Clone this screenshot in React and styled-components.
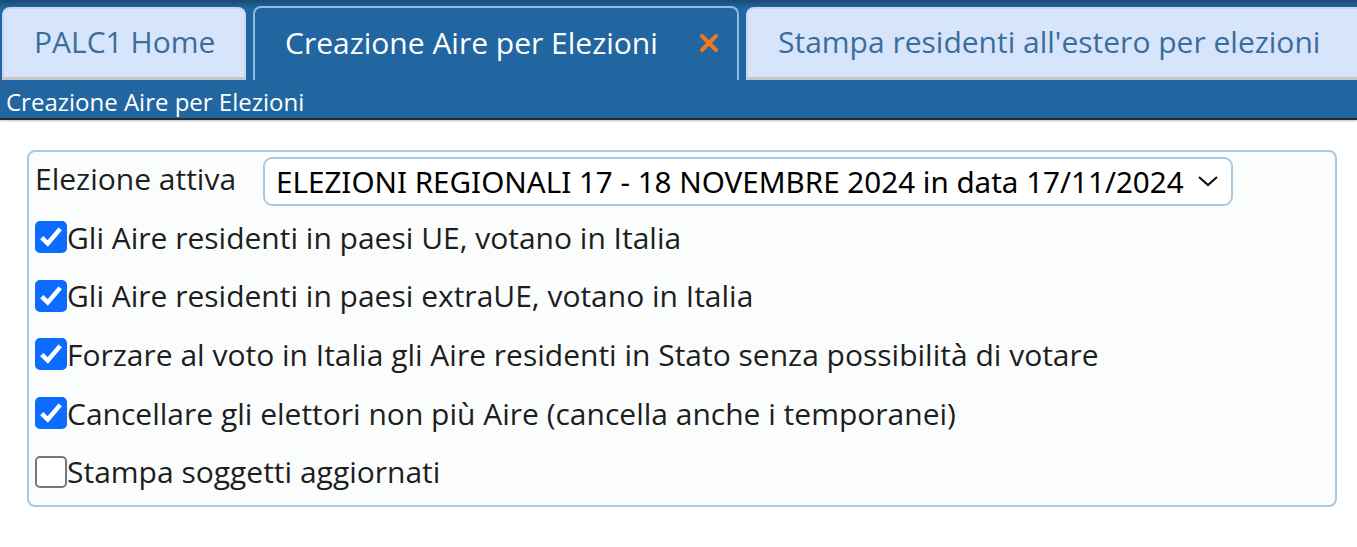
import React from "react";
import styled, { createGlobalStyle } from "styled-components";

const GlobalStyle = createGlobalStyle`
  body {
    margin: 0;
    background: #ffffff;
    font-family: "Open Sans", "Noto Sans", sans-serif;
  }
`;

const Header = styled.div`
  background: #2166a0;
  border-bottom: 2px solid #2b2b2b;
  box-shadow: 0 1px 2px rgba(0, 0, 0, 0.25);
`;

const TabRow = styled.div`
  display: flex;
  align-items: flex-end;
  gap: 7px;
  padding: 6px 0 0 2px;
  background: linear-gradient(#1b4a74 0px, #2166a0 8px);
  overflow: hidden;
`;

const Tab = styled.div`
  flex: none;
  display: flex;
  align-items: center;
  box-sizing: border-box;
  height: ${(p) => (p.active ? "74px" : "73px")};
  padding: 0 ${(p) => (p.active ? "18px" : "32px")} 4px 30px;
  width: ${(p) => p.width};
  font-size: 30px;
  border-radius: 8px 8px 0 0;
  white-space: nowrap;
  background: ${(p) => (p.active ? "#2166a0" : "#d6e5fb")};
  color: ${(p) => (p.active ? "#ffffff" : "#3b6d9c")};
  border: 2px solid ${(p) => (p.active ? "#8cbbe3" : "#c9d8ee")};
  border-bottom: ${(p) => (p.active ? "none" : "3px solid #c6c6c6")};
`;

const TabLabel = styled.span`
  flex: 1;
`;

const CloseIcon = styled.svg`
  width: 20px;
  height: 20px;
  margin-top: 2px;
`;

const SubTitle = styled.div`
  color: #ffffff;
  font-size: 24px;
  padding: 8px 6px 0;
  height: 30px;
  line-height: 28px;
`;

const Body = styled.div`
  padding: 30px 21px 0 27px;
`;

const Panel = styled.div`
  box-sizing: border-box;
  width: 1310px;
  height: 357px;
  border: 2px solid #a9c9e2;
  border-radius: 8px;
  background: #fbfdfd;
  padding: 4px 6px 0 6px;
  display: flex;
  flex-direction: column;
`;

const SelectRow = styled.div`
  display: flex;
  align-items: center;
  height: 50px;
  margin-bottom: 2px;
`;

const Label = styled.div`
  width: 228px;
  font-size: 30px;
  color: #1e1e1e;
  margin-top: -6px;
`;

const Select = styled.div`
  box-sizing: border-box;
  width: 970px;
  height: 49px;
  border: 2px solid #a9c9e2;
  border-radius: 9px;
  background: #ffffff;
  display: flex;
  align-items: center;
  padding: 0 12px 0 11px;
  font-family: "Noto Sans", "Open Sans", sans-serif;
  font-size: 29.6px;
  color: #000000;
  justify-content: space-between;
`;

const Chevron = styled.svg`
  width: 22px;
  height: 14px;
`;

const CheckRow = styled.label`
  display: flex;
  align-items: center;
  height: 58.6px;
  font-size: 30px;
  color: #1e1e1e;
`;

const Box = styled.span`
  box-sizing: border-box;
  flex: none;
  width: 32px;
  height: 32px;
  border-radius: 5px;
  display: flex;
  align-items: center;
  justify-content: center;
  background: ${(p) => (p.checked ? "#0b6cff" : "#ffffff")};
  border: 2px solid ${(p) => (p.checked ? "#0b6cff" : "#777777")};
`;

const Tick = styled.svg`
  width: 26px;
  height: 26px;
`;

const options = [
  { text: "Gli Aire residenti in paesi UE, votano in Italia", checked: true },
  { text: "Gli Aire residenti in paesi extraUE, votano in Italia", checked: true },
  { text: "Forzare al voto in Italia gli Aire residenti in Stato senza possibilità di votare", checked: true },
  { text: "Cancellare gli elettori non più Aire (cancella anche i temporanei)", checked: true },
  { text: "Stampa soggetti aggiornati", checked: false },
];

const App = () => {
  return (
    <>
      <GlobalStyle />
      <Header>
        <TabRow>
          <Tab width="244px">PALC1 Home</Tab>
          <Tab active width="486px">
            <TabLabel>Creazione Aire per Elezioni</TabLabel>
            <CloseIcon viewBox="0 0 20 20">
              <path d="M3 3 L17 17 M17 3 L3 17" stroke="#ee7a1d" strokeWidth="4" strokeLinecap="round" />
            </CloseIcon>
          </Tab>
          <Tab width="640px">Stampa residenti all'estero per elezioni</Tab>
        </TabRow>
        <SubTitle>Creazione Aire per Elezioni</SubTitle>
      </Header>
      <Body>
        <Panel>
          <SelectRow>
            <Label>Elezione attiva</Label>
            <Select>
              <span>ELEZIONI REGIONALI 17 - 18 NOVEMBRE 2024 in data 17/11/2024</span>
              <Chevron viewBox="0 0 22 14">
                <path d="M2 3 L11 11 L20 3" fill="none" stroke="#111" strokeWidth="2.2" />
              </Chevron>
            </Select>
          </SelectRow>
          {options.map((o) => (
            <CheckRow key={o.text}>
              <Box checked={o.checked}>
                {o.checked && (
                  <Tick viewBox="0 0 24 24">
                    <path d="M3.5 12.5 L9 18 L20.5 4.5" fill="none" stroke="#fff" strokeWidth="4.2" />
                  </Tick>
                )}
              </Box>
              {o.text}
            </CheckRow>
          ))}
        </Panel>
      </Body>
    </>
  );
};

export default App;
